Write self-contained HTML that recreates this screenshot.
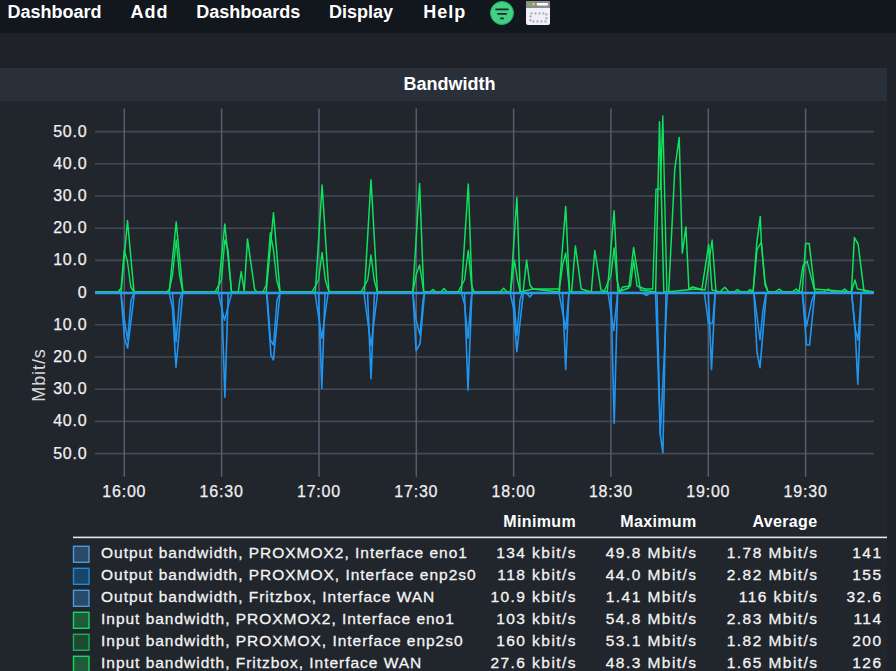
<!DOCTYPE html>
<html><head><meta charset="utf-8"><title>Bandwidth</title>
<style>
html,body{margin:0;padding:0;width:896px;height:671px;overflow:hidden;background:#1f2329;}
svg{display:block;font-family:"Liberation Sans",sans-serif;}
.menu{font-size:18px;font-weight:700;fill:#ffffff;}
.ax{font-size:16px;fill:#f0f0f0;letter-spacing:0.8px;stroke:#f0f0f0;stroke-width:0.25px;}
.lg{font-size:15.5px;fill:#f4f4f4;letter-spacing:0.98px;stroke:#f4f4f4;stroke-width:0.3px;}
.num{font-size:15.5px;fill:#f4f4f4;letter-spacing:1.45px;stroke:#f4f4f4;stroke-width:0.3px;}
.hd{font-size:16px;font-weight:700;fill:#ffffff;letter-spacing:0.35px;}
</style></head>
<body>
<svg width="896" height="671" viewBox="0 0 896 671">
<rect x="0" y="0" width="896" height="671" fill="#1f2329"/>
<rect x="0" y="0" width="896" height="33" fill="#12161d"/>
<text x="7.5" y="18" class="menu">Dashboard</text>
<text x="130.5" y="18" class="menu" style="letter-spacing:1px">Add</text>
<text x="196.3" y="18" class="menu">Dashboards</text>
<text x="329" y="18" class="menu">Display</text>
<text x="423.2" y="18" class="menu" style="letter-spacing:1px">Help</text>
<circle cx="502" cy="13" r="11.5" fill="#42d084" stroke="#2ea864" stroke-width="1"/>
<rect x="495.2" y="8.4" width="13.6" height="1.8" rx="0.9" fill="#1b2a26"/>
<rect x="497" y="13" width="10" height="1.8" rx="0.9" fill="#1b2a26"/>
<rect x="500" y="17.5" width="4" height="1.8" rx="0.9" fill="#1b2a26"/>
<rect x="526" y="1" width="24" height="24" rx="2" fill="#f1eff9"/>
<path d="M526,8 V3 a2,2 0 0 1 2,-2 H548 a2,2 0 0 1 2,2 V8 Z" fill="#8a8d92"/>
<circle cx="529.3" cy="4.3" r="1.3" fill="#6cc644"/>
<circle cx="533.4" cy="4.3" r="1.3" fill="#f0d020"/>
<rect x="536.7" y="3" width="11.2" height="2.6" rx="1" fill="#ffffff"/>
<g fill="#a3a2ab">
<rect x="530.5" y="12.5" width="1.9" height="1.9"/><rect x="534.5" y="12.5" width="1.9" height="1.9"/><rect x="538.5" y="12.5" width="1.9" height="1.9"/><rect x="542.5" y="12.5" width="1.9" height="1.9"/><rect x="545.5" y="13.5" width="1.9" height="1.9"/>
<rect x="529.5" y="15.5" width="1.9" height="1.9"/><rect x="545.5" y="17.3" width="1.9" height="1.9"/>
<rect x="529.5" y="19.2" width="1.9" height="1.9"/><rect x="532.5" y="20.5" width="1.9" height="1.9"/><rect x="536.5" y="20.5" width="1.9" height="1.9"/><rect x="540.5" y="20.5" width="1.9" height="1.9"/><rect x="544.5" y="20.5" width="1.9" height="1.9"/>
</g>
<rect x="0" y="68" width="887" height="33" fill="#29303a"/>
<rect x="0" y="101" width="887" height="570" fill="#21252c"/>
<text x="449.6" y="90" text-anchor="middle" class="menu">Bandwidth</text>
<line x1="95" y1="292.6" x2="874" y2="292.6" stroke="#414b57" stroke-width="1.6"/><line x1="95" y1="260.4" x2="874" y2="260.4" stroke="#414b57" stroke-width="1.6"/><line x1="95" y1="324.8" x2="874" y2="324.8" stroke="#414b57" stroke-width="1.6"/><line x1="95" y1="228.2" x2="874" y2="228.2" stroke="#414b57" stroke-width="1.6"/><line x1="95" y1="357.0" x2="874" y2="357.0" stroke="#414b57" stroke-width="1.6"/><line x1="95" y1="196.0" x2="874" y2="196.0" stroke="#414b57" stroke-width="1.6"/><line x1="95" y1="389.2" x2="874" y2="389.2" stroke="#414b57" stroke-width="1.6"/><line x1="95" y1="163.8" x2="874" y2="163.8" stroke="#414b57" stroke-width="1.6"/><line x1="95" y1="421.4" x2="874" y2="421.4" stroke="#414b57" stroke-width="1.6"/><line x1="95" y1="131.6" x2="874" y2="131.6" stroke="#414b57" stroke-width="1.6"/><line x1="95" y1="453.6" x2="874" y2="453.6" stroke="#414b57" stroke-width="1.6"/><line x1="124.3" y1="108.5" x2="124.3" y2="476.8" stroke="#535f70" stroke-width="1.5"/><text x="124.3" y="496.8" text-anchor="middle" class="ax">16:00</text><line x1="221.6" y1="108.5" x2="221.6" y2="476.8" stroke="#535f70" stroke-width="1.5"/><text x="221.6" y="496.8" text-anchor="middle" class="ax">16:30</text><line x1="319.0" y1="108.5" x2="319.0" y2="476.8" stroke="#535f70" stroke-width="1.5"/><text x="319.0" y="496.8" text-anchor="middle" class="ax">17:00</text><line x1="416.3" y1="108.5" x2="416.3" y2="476.8" stroke="#535f70" stroke-width="1.5"/><text x="416.3" y="496.8" text-anchor="middle" class="ax">17:30</text><line x1="513.6" y1="108.5" x2="513.6" y2="476.8" stroke="#535f70" stroke-width="1.5"/><text x="513.6" y="496.8" text-anchor="middle" class="ax">18:00</text><line x1="610.9" y1="108.5" x2="610.9" y2="476.8" stroke="#535f70" stroke-width="1.5"/><text x="610.9" y="496.8" text-anchor="middle" class="ax">18:30</text><line x1="708.3" y1="108.5" x2="708.3" y2="476.8" stroke="#535f70" stroke-width="1.5"/><text x="708.3" y="496.8" text-anchor="middle" class="ax">19:00</text><line x1="805.6" y1="108.5" x2="805.6" y2="476.8" stroke="#535f70" stroke-width="1.5"/><text x="805.6" y="496.8" text-anchor="middle" class="ax">19:30</text>
<text x="87.5" y="297.6" text-anchor="end" class="ax">0</text><text x="87.5" y="265.4" text-anchor="end" class="ax">10.0</text><text x="87.5" y="329.8" text-anchor="end" class="ax">10.0</text><text x="87.5" y="233.2" text-anchor="end" class="ax">20.0</text><text x="87.5" y="362.0" text-anchor="end" class="ax">20.0</text><text x="87.5" y="201.0" text-anchor="end" class="ax">30.0</text><text x="87.5" y="394.2" text-anchor="end" class="ax">30.0</text><text x="87.5" y="168.8" text-anchor="end" class="ax">40.0</text><text x="87.5" y="426.4" text-anchor="end" class="ax">40.0</text><text x="87.5" y="136.6" text-anchor="end" class="ax">50.0</text><text x="87.5" y="458.6" text-anchor="end" class="ax">50.0</text>
<text transform="translate(44.6,375) rotate(-90)" text-anchor="middle" style="font-size:18px;fill:#d8d8d8;letter-spacing:0.9px;">Mbit/s</text>
<polyline points="95.0,292.0 118.0,292.0 121.1,288.0 124.3,250.0 127.5,262.0 130.8,287.0 134.0,292.0 166.0,292.0 169.2,290.0 172.5,275.0 176.2,240.0 179.5,275.0 182.9,292.0 215.0,292.0 221.5,280.0 224.8,240.0 228.0,250.0 231.5,292.0 263.0,292.0 266.2,285.0 270.3,232.8 273.5,250.0 276.7,280.0 280.0,292.0 312.0,292.0 318.5,280.0 322.1,252.4 325.3,280.0 328.9,292.0 361.0,292.0 367.7,280.0 371.0,255.0 374.2,280.0 377.4,292.0 413.0,292.0 416.1,275.0 419.6,265.0 423.7,292.0 430.0,292.0 433.0,289.5 436.0,292.0 441.0,292.0 444.0,288.5 447.0,292.0 458.0,292.0 464.5,280.0 468.3,250.4 471.5,285.0 474.0,292.0 500.0,292.0 503.7,288.2 507.0,292.0 510.5,292.0 514.4,260.1 517.5,280.0 520.2,292.0 533.0,289.0 560.0,289.0 559.0,292.0 562.8,264.0 565.7,253.0 569.6,292.0 604.0,292.0 611.0,275.0 614.1,247.9 617.0,280.0 620.0,292.0 622.5,287.0 630.5,286.0 633.6,260.0 637.0,286.0 645.0,289.0 652.7,289.0 656.0,189.1 660.4,189.1 662.8,116.0 666.9,292.0 695.0,289.0 705.0,290.0 712.1,240.0 716.0,292.0 753.1,292.0 757.0,250.0 761.3,242.0 765.0,285.0 768.0,292.0 792.0,292.0 796.2,289.0 799.0,292.0 802.9,265.7 807.1,261.2 814.1,289.0 851.4,292.0 855.0,280.0 857.4,289.0 874.0,292.0" fill="none" stroke="#0ee35c" stroke-width="1.4" stroke-linejoin="round"/>
<polyline points="95.0,292.0 121.1,292.0 127.5,220.6 134.0,292.0 169.2,292.0 176.2,222.0 182.9,292.0 218.1,292.0 224.8,224.1 231.5,292.0 238.2,292.0 241.2,271.5 244.2,291.0 247.5,239.0 254.6,289.4 257.0,292.0 266.2,292.0 273.5,212.7 280.0,292.0 315.3,292.0 322.1,185.1 328.9,292.0 364.4,292.0 371.0,179.7 377.4,292.0 412.8,292.0 419.6,183.6 423.7,292.0 461.3,292.0 468.3,184.0 472.1,292.0 510.5,292.0 516.9,197.5 520.2,292.0 523.1,292.0 526.6,260.1 529.9,285.0 533.0,289.0 559.0,292.0 565.7,206.4 569.6,292.0 571.6,292.0 575.4,246.0 581.2,289.0 591.3,292.0 594.8,250.5 601.0,290.0 607.3,292.0 614.1,210.7 618.0,292.0 628.8,288.0 633.6,247.5 640.4,290.0 655.6,292.0 659.5,121.8 663.8,292.0 668.7,292.0 674.8,169.0 679.2,137.5 682.3,253.1 685.9,226.9 688.9,289.2 692.5,287.0 700.0,289.0 701.7,290.0 708.7,244.7 712.0,290.0 720.0,292.0 724.8,287.2 729.0,292.0 734.0,292.0 737.5,289.5 741.0,292.0 747.0,292.0 750.1,289.5 753.1,292.0 756.8,243.2 760.3,216.4 761.3,242.0 765.0,282.0 768.0,292.0 775.0,292.0 779.2,289.0 783.0,292.0 799.2,292.0 802.2,292.0 805.6,243.6 809.2,243.6 814.9,292.0 824.0,292.0 828.3,289.0 832.0,292.0 841.0,292.0 844.7,289.0 848.0,292.0 851.4,292.0 854.4,237.6 858.1,244.0 864.1,292.0 874.0,292.0" fill="none" stroke="#0ee35c" stroke-width="1.5" stroke-linejoin="round"/>
<polyline points="95.0,293.0 121.0,293.0 124.5,320.0 127.6,340.0 131.0,300.0 134.0,293.0 172.5,293.0 176.0,341.9 179.5,300.0 182.0,293.0 218.3,293.0 224.5,320.4 231.7,293.0 267.0,293.0 270.5,340.0 273.5,345.0 277.0,300.0 280.0,293.0 315.0,293.0 321.8,338.3 328.1,293.0 363.9,293.0 371.0,345.5 377.6,293.0 413.0,293.0 416.1,320.0 420.0,335.0 423.0,300.0 424.5,293.0 461.5,293.0 464.5,304.0 468.0,338.3 471.0,300.0 472.0,293.0 513.5,293.0 516.8,335.6 520.0,300.0 522.0,293.0 559.0,293.0 565.7,329.0 568.9,293.0 608.0,293.0 613.7,330.7 617.6,293.0 657.0,293.0 660.3,434.7 667.3,293.0 704.3,293.0 708.4,323.2 712.6,323.0 715.2,293.0 754.0,293.0 760.0,340.0 763.0,310.0 766.0,293.0 802.4,293.0 806.5,326.3 812.0,300.0 814.8,293.0 851.6,293.0 855.1,328.4 858.0,340.0 861.3,293.0 874.0,293.0" fill="none" stroke="#2196f0" stroke-width="1.5" stroke-linejoin="round"/>
<polyline points="95.0,293.0 120.9,293.0 124.5,338.3 127.6,348.1 134.4,293.0 169.2,293.0 172.5,308.0 176.0,367.3 182.7,293.0 221.5,293.0 224.9,397.3 228.2,293.0 266.6,293.0 271.0,355.3 273.4,359.8 280.0,293.0 318.5,293.0 321.8,388.4 325.0,293.0 367.5,293.0 371.0,378.6 374.5,293.0 412.9,293.0 416.1,350.8 420.0,343.7 424.5,293.0 464.5,293.0 468.0,390.2 471.9,293.0 510.2,293.0 513.5,308.0 516.8,351.7 523.3,293.0 526.5,293.0 529.9,297.0 533.0,293.0 562.5,293.0 565.7,369.6 568.9,293.0 611.0,293.0 614.2,423.4 617.6,293.0 643.0,293.0 646.3,295.5 650.0,293.0 655.6,293.0 660.3,434.7 662.9,453.0 666.0,293.0 708.4,293.0 711.5,369.7 715.2,293.0 753.9,293.0 757.0,352.0 760.0,367.6 766.3,293.0 802.4,293.0 806.5,344.9 809.6,345.0 814.8,293.0 851.6,293.0 855.1,328.4 857.8,384.2 861.3,293.0 874.0,293.0" fill="none" stroke="#2196f0" stroke-width="1.6" stroke-linejoin="round"/>
<line x1="95" y1="293" x2="874" y2="293" stroke="#2a9ce6" stroke-width="2.4"/>
<text x="576" y="527.3" text-anchor="end" class="hd">Minimum</text>
<text x="696.5" y="527.3" text-anchor="end" class="hd">Maximum</text>
<text x="817.5" y="527.3" text-anchor="end" class="hd">Average</text>
<rect x="73" y="536.6" width="814" height="1.6" fill="#e8e8e8"/>
<rect x="73.5" y="546.3" width="15.5" height="16" fill="#2b4a68" stroke="#4a9ae0" stroke-width="1.4"/><text x="101" y="558.2" class="lg">Output bandwidth, PROXMOX2, Interface eno1</text><text x="577" y="558.2" text-anchor="end" class="num">134 kbit/s</text><text x="697.5" y="558.2" text-anchor="end" class="num">49.8 Mbit/s</text><text x="818.5" y="558.2" text-anchor="end" class="num">1.78 Mbit/s</text><text x="882.5" y="558.2" text-anchor="end" class="num">141</text><rect x="73.5" y="568.3" width="15.5" height="16" fill="#1b4469" stroke="#1a8ae2" stroke-width="1.4"/><text x="101" y="580.2" class="lg">Output bandwidth, PROXMOX, Interface enp2s0</text><text x="577" y="580.2" text-anchor="end" class="num">118 kbit/s</text><text x="697.5" y="580.2" text-anchor="end" class="num">44.0 Mbit/s</text><text x="818.5" y="580.2" text-anchor="end" class="num">2.82 Mbit/s</text><text x="882.5" y="580.2" text-anchor="end" class="num">155</text><rect x="73.5" y="590.3" width="15.5" height="16" fill="#2b4a68" stroke="#4a9ae0" stroke-width="1.4"/><text x="101" y="602.2" class="lg">Output bandwidth, Fritzbox, Interface WAN</text><text x="577" y="602.2" text-anchor="end" class="num">10.9 kbit/s</text><text x="697.5" y="602.2" text-anchor="end" class="num">1.41 Mbit/s</text><text x="818.5" y="602.2" text-anchor="end" class="num">116 kbit/s</text><text x="882.5" y="602.2" text-anchor="end" class="num">32.6</text><rect x="73.5" y="612.3" width="15.5" height="16" fill="#1f5a3a" stroke="#18d862" stroke-width="1.4"/><text x="101" y="624.2" class="lg">Input bandwidth, PROXMOX2, Interface eno1</text><text x="577" y="624.2" text-anchor="end" class="num">103 kbit/s</text><text x="697.5" y="624.2" text-anchor="end" class="num">54.8 Mbit/s</text><text x="818.5" y="624.2" text-anchor="end" class="num">2.83 Mbit/s</text><text x="882.5" y="624.2" text-anchor="end" class="num">114</text><rect x="73.5" y="634.3" width="15.5" height="16" fill="#1d4a33" stroke="#15b452" stroke-width="1.4"/><text x="101" y="646.2" class="lg">Input bandwidth, PROXMOX, Interface enp2s0</text><text x="577" y="646.2" text-anchor="end" class="num">160 kbit/s</text><text x="697.5" y="646.2" text-anchor="end" class="num">53.1 Mbit/s</text><text x="818.5" y="646.2" text-anchor="end" class="num">1.82 Mbit/s</text><text x="882.5" y="646.2" text-anchor="end" class="num">200</text><rect x="73.5" y="656.3" width="15.5" height="16" fill="#1f5a3a" stroke="#18d862" stroke-width="1.4"/><text x="101" y="668.2" class="lg">Input bandwidth, Fritzbox, Interface WAN</text><text x="577" y="668.2" text-anchor="end" class="num">27.6 kbit/s</text><text x="697.5" y="668.2" text-anchor="end" class="num">48.3 Mbit/s</text><text x="818.5" y="668.2" text-anchor="end" class="num">1.65 Mbit/s</text><text x="882.5" y="668.2" text-anchor="end" class="num">126</text>
</svg>
</body></html>
